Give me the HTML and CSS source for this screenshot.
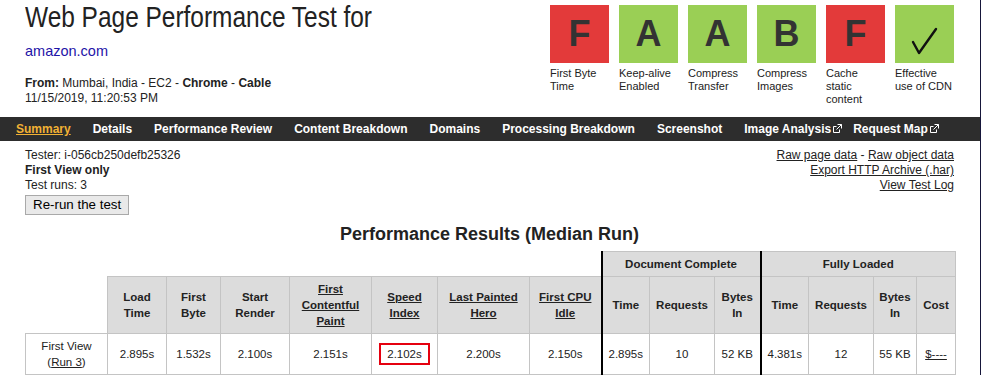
FILE: index.html
```html
<!DOCTYPE html>
<html lang="en">
<head>
    <meta charset="UTF-8">
    <meta name="viewport" content="width=device-width, initial-scale=1.0">
    <title>WebPageTest Test Result - amazon.com</title>
    <link rel="stylesheet" href="styles.css">
</head>
<body>
    <div id="header">
        <div id="testInfo">
            <h1>Web Page Performance Test for</h1>
            <a class="site" href="#">amazon.com</a>
            <p class="from"><strong>From:</strong> Mumbai, India - EC2 - <b>Chrome</b> - <b>Cable</b><br>11/15/2019, 11:20:53 PM</p>
        </div>

        <ul id="grades">
            <li><span class="grade bad">F</span>First Byte Time</li>
            <li><span class="grade good">A</span>Keep-alive Enabled</li>
            <li><span class="grade good">A</span>Compress Transfer</li>
            <li><span class="grade good">B</span>Compress Images</li>
            <li><span class="grade bad">F</span>Cache static content</li>
            <li>
                <span class="grade good">
                    <svg width="59" height="58" viewBox="0 0 59 58">
                        <path d="M18 37 L24 48 L41 24" fill="none" stroke="#111" stroke-width="2.4" stroke-linecap="round" stroke-linejoin="round"/>
                    </svg>
                </span>Effective use of CDN
            </li>
        </ul>
    </div>

    <ul id="nav">
        <li><a class="current" href="#">Summary</a></li>
        <li><a href="#">Details</a></li>
        <li><a href="#">Performance Review</a></li>
        <li><a href="#">Content Breakdown</a></li>
        <li><a href="#">Domains</a></li>
        <li><a href="#">Processing Breakdown</a></li>
        <li><a href="#">Screenshot</a></li>
        <li><a href="#">Image Analysis<svg class="ext" width="9" height="9" viewBox="0 0 9 9"><path d="M3.5 2.5h-3v6h6v-3" fill="none" stroke="#fff"/><path d="M4.5 0.5h4v4M8.5 0.5l-5 5" fill="none" stroke="#fff"/></svg></a></li>
        <li><a href="#">Request Map<svg class="ext" width="9" height="9" viewBox="0 0 9 9"><path d="M3.5 2.5h-3v6h6v-3" fill="none" stroke="#fff"/><path d="M4.5 0.5h4v4M8.5 0.5l-5 5" fill="none" stroke="#fff"/></svg></a></li>
    </ul>

    <div id="runInfo">
        <div class="tester">
            Tester: i-056cb250defb25326<br>
            <b>First View only</b><br>
            Test runs: 3<br>
            <button id="rerunBtn">Re-run the test</button>
        </div>
        <div class="downloads">
            <a href="#">Raw page data</a> - <a href="#">Raw object data</a><br>
            <a href="#">Export HTTP Archive (.har)</a><br>
            <a href="#">View Test Log</a>
        </div>
    </div>

    <div id="results">
        <h2>Performance Results (Median Run)</h2>
        <table>
            <colgroup>
                <col class="c-label">
                <col class="c-load">
                <col class="c-ttfb">
                <col class="c-render">
                <col class="c-fcp">
                <col class="c-si">
                <col class="c-lph">
                <col class="c-cpu">
                <col class="c-time">
                <col class="c-req">
                <col class="c-bytes">
                <col class="c-time2">
                <col class="c-req">
                <col class="c-bytes2">
                <col class="c-cost">
            </colgroup>
            <tr>
                <th class="empty" colspan="8"></th>
                <th class="divider" colspan="3">Document Complete</th>
                <th class="divider" colspan="4">Fully Loaded</th>
            </tr>
            <tr>
                <th class="empty"></th>
                <th>Load Time</th>
                <th>First Byte</th>
                <th>Start Render</th>
                <th><a href="#">First Contentful Paint</a></th>
                <th><a href="#">Speed Index</a></th>
                <th><a href="#">Last Painted Hero</a></th>
                <th><a href="#">First CPU Idle</a></th>
                <th class="divider">Time</th>
                <th>Requests</th>
                <th>Bytes In</th>
                <th class="divider">Time</th>
                <th>Requests</th>
                <th>Bytes In</th>
                <th>Cost</th>
            </tr>
            <tr>
                <td>First View<br>(<a href="#">Run 3</a>)</td>
                <td>2.895s</td>
                <td>1.532s</td>
                <td>2.100s</td>
                <td>2.151s</td>
                <td><span class="highlight">2.102s</span></td>
                <td>2.200s</td>
                <td>2.150s</td>
                <td class="divider">2.895s</td>
                <td>10</td>
                <td>52 KB</td>
                <td class="divider">4.381s</td>
                <td>12</td>
                <td>55 KB</td>
                <td><a href="#">$----</a></td>
            </tr>
        </table>
    </div>
</body>
</html>
```

FILE: styles.css
```css
html {
    border-right: 1px solid #16163a; /* window edge */
    background-color: #fff;
}

body {
    font-family: 'Liberation Sans', Arial, sans-serif;
    font-size: 12px;
    color: #222;
    margin: 0;
    padding: 0;
}

a {
    color: #222;
}

#header {
    display: flex;
    justify-content: space-between;
    align-items: flex-start;
    padding: 0 26px 11px 25px;
}

h1 {
    font-size: 30px;
    font-weight: normal;
    line-height: 34px;
    margin: 0;
    white-space: nowrap;
    transform: scaleX(0.815);  /* narrow face isn't installed */
    transform-origin: left top;
}

.site {
    display: block;
    font-size: 14.5px;
    line-height: 17px;
    margin-top: 9px;
    color: #1f14a8;
    text-decoration: none;
}

.from {
    margin: 16px 0 0;
    line-height: 15px;
}

#grades {
    display: flex;
    gap: 10px;
    list-style: none;
    margin: 0;
    padding: 5px 0 0;
}

#grades li {
    width: 59px;
    font-size: 11px;
    line-height: 13px;
}

.grade {
    display: block;
    height: 58px;
    margin-bottom: 4px;
    text-align: center;
    font-size: 36px;
    font-weight: bold;
    line-height: 58px;
    color: #333;
}

.grade svg {
    display: block;
}

.bad {
    background-color: #e33a3a;  /* failing grade */
}

.good {
    background-color: #9acf55;  /* passing grade */
}

#nav {
    display: flex;
    list-style: none;
    margin: 0;
    padding: 0 5px;
    height: 24px;
    background-color: #2d2d2d;
}

#nav a {
    display: block;
    padding: 0 11px;
    line-height: 24px;
    font-weight: bold;
    color: #fff;
    text-decoration: none;
}

#nav a.current {
    color: #f2b134;
    text-decoration: underline;
}

.ext {
    margin: 0 -11px 0 2px;  /* icon sits in the link's padding */
}

#runInfo {
    display: flex;
    justify-content: space-between;
    padding: 7px 26px 0 25px;
    line-height: 15px;
}

.downloads {
    text-align: right;
}

#rerunBtn {
    margin-top: 2px;
    padding: 1px 7px;
    font-family: 'Liberation Sans', Arial, sans-serif;
    font-size: 13.33px;
    line-height: 16px;
    color: #000;
    background-color: #e9e9e9;
    border: 1px solid #a9a9a9;
    border-radius: 0;
}

#results {
    padding: 0 26px 0 25px;
}

h2 {
    text-align: center;
    font-size: 18px;
    line-height: 20px;
    margin: 9px 0 7px;
}

table {
    width: 930px;
    table-layout: fixed;
    border-collapse: collapse;
    font-size: 11.5px;
    line-height: 16px;
}

th, td {
    padding: 4px;
    border: 1px solid #c4c4c4;
    text-align: center;
    vertical-align: middle;
}

th {
    background-color: #dcdcdc;
}

th.empty {
    background: none;
    border: none;
}

.divider {
    border-left: 2px solid #000;
}

.highlight {
    display: inline-block;
    padding: 1px 6px;
    border: 2px solid #e5000f;
}

.c-label { width: 82px; }
.c-load { width: 59px; }
.c-ttfb { width: 54px; }
.c-render { width: 69px; }
.c-fcp { width: 82px; }
.c-si { width: 66px; }
.c-lph { width: 92px; }
.c-cpu { width: 72px; }
.c-time { width: 48px; }
.c-req { width: 65px; }
.c-bytes { width: 46px; }
.c-time2 { width: 48px; }
.c-bytes2 { width: 43px; }
.c-cost { width: 39px; }
```
